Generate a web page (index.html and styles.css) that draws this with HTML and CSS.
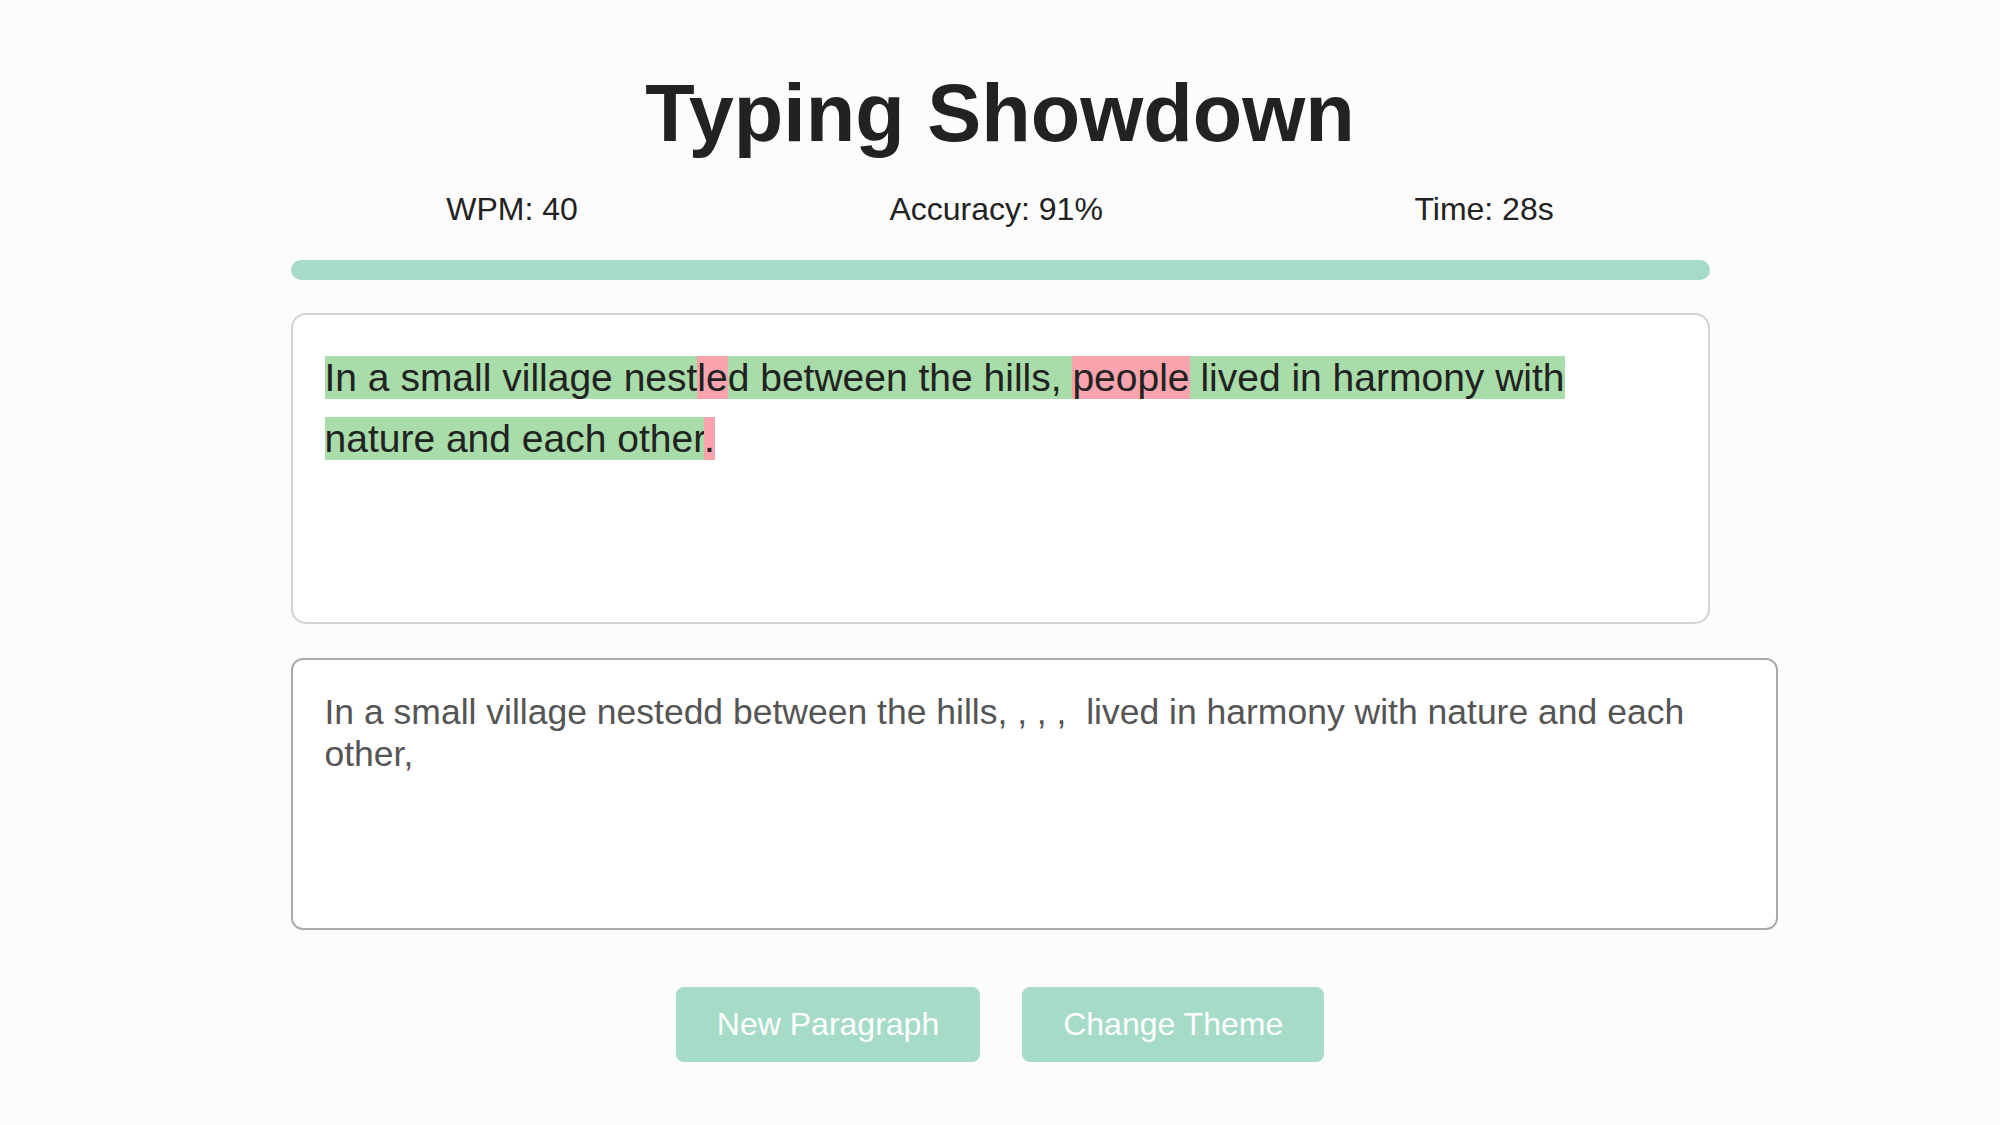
FILE: index.html
```html
<!DOCTYPE html>
<html lang="en">
<head>
    <meta charset="UTF-8">
    <meta name="viewport" content="width=device-width, initial-scale=1.0">
    <title>Typing Showdown</title>
    <link rel="stylesheet" href="styles.css">
</head>
<body>
    <div class="container">
        <h1>Typing Showdown</h1>

        <div class="stats">
            <div>WPM: <span id="wpm">40</span></div>
            <div>Accuracy: <span id="accuracy">91</span>%</div>
            <div>Time: <span id="time">28</span>s</div>
        </div>

        <div class="progress"></div>

        <div class="paragraph" id="paragraph"><span class="correct">In a small village nest</span><span class="incorrect">le</span><span class="correct">d between the hills, </span><span class="incorrect">people</span><span class="correct"> lived in harmony with nature and each other</span><span class="incorrect">.</span></div>

        <textarea id="typingInput" spellcheck="false">In a small village nestedd between the hills, , , ,  lived in harmony with nature and each other,</textarea>

        <div class="buttons">
            <button>New Paragraph</button>
            <button>Change Theme</button>
        </div>
    </div>
</body>
</html>
```

FILE: styles.css
```css
body {
    font-family: "Liberation Sans", Arial, sans-serif;
    background-color: #fdfcfc;
    color: #222;
    margin: 0;
}

.container {
    width: 1419px;
    margin: 0 auto;
}

h1 {
    font-size: 81px;
    font-weight: bold;
    text-align: center;
    margin: 67px 0 0;
    line-height: 93px;
}

.stats {
    display: flex;
    justify-content: space-around;
    font-size: 32px;
    margin-top: 31px;
}

.progress {
    height: 20px;
    margin-top: 32px;
    border-radius: 10px;
    background-color: #a6dbc8;
}

.paragraph {
    box-sizing: border-box;
    height: 311px;
    margin-top: 33px;
    padding: 32px;
    border: 2px solid #d2d2d2;
    border-radius: 15px;
    background-color: #fff;
    font-size: 39px;
    line-height: 61px;
}

.correct {
    background-color: #a8dca8;
}

.incorrect {
    background-color: #f8a3ae;
}

textarea {
    display: block;
    width: 1419px;
    height: 204px;
    margin-top: 34px;
    padding: 32px;
    border: 2px solid #aaa;
    border-radius: 12px;
    background-color: #fff;
    font-family: "Liberation Sans", Arial, sans-serif;
    font-size: 35.5px;
    line-height: 41.5px;
    color: #555;
    resize: none;
    outline: none;
}

.buttons {
    display: flex;
    justify-content: center;
    gap: 42px;
    margin-top: 57px;
}

button {
    padding: 19px 41px;
    font-family: "Liberation Sans", Arial, sans-serif;
    font-size: 32px;
    color: #fff;
    background-color: #a6dbc8;
    border: none;
    border-radius: 8px;
}
```
